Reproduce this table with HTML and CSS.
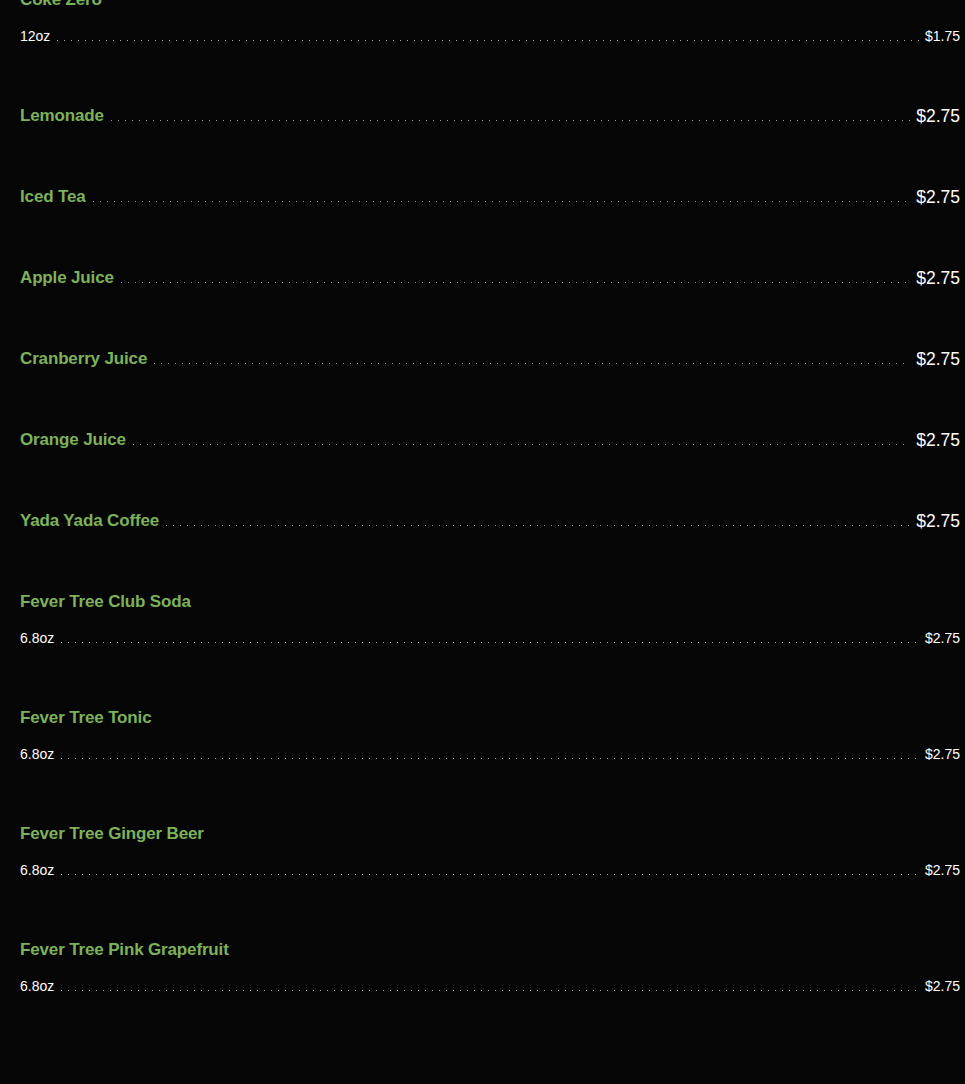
FILE: index.html
```html
<!DOCTYPE html>
<html lang="en">
<head>
    <meta charset="UTF-8">
    <title>Drinks</title>
    <link rel="stylesheet" href="styles.css">
</head>
<body>
    <div class="menu">
        <div class="item">
            <h3 class="item-name">Coke Zero</h3>
            <div class="item-row size-row">
                <span class="size">12oz</span>
                <span class="dots"></span>
                <span class="price">$1.75</span>
            </div>
        </div>

        <div class="item">
            <div class="item-row">
                <h3 class="item-name">Lemonade</h3>
                <span class="dots"></span>
                <span class="price">$2.75</span>
            </div>
        </div>

        <div class="item">
            <div class="item-row">
                <h3 class="item-name">Iced Tea</h3>
                <span class="dots"></span>
                <span class="price">$2.75</span>
            </div>
        </div>

        <div class="item">
            <div class="item-row">
                <h3 class="item-name">Apple Juice</h3>
                <span class="dots"></span>
                <span class="price">$2.75</span>
            </div>
        </div>

        <div class="item">
            <div class="item-row">
                <h3 class="item-name">Cranberry Juice</h3>
                <span class="dots"></span>
                <span class="price">$2.75</span>
            </div>
        </div>

        <div class="item">
            <div class="item-row">
                <h3 class="item-name">Orange Juice</h3>
                <span class="dots"></span>
                <span class="price">$2.75</span>
            </div>
        </div>

        <div class="item">
            <div class="item-row">
                <h3 class="item-name">Yada Yada Coffee</h3>
                <span class="dots"></span>
                <span class="price">$2.75</span>
            </div>
        </div>

        <div class="item">
            <h3 class="item-name">Fever Tree Club Soda</h3>
            <div class="item-row size-row">
                <span class="size">6.8oz</span>
                <span class="dots"></span>
                <span class="price">$2.75</span>
            </div>
        </div>

        <div class="item">
            <h3 class="item-name">Fever Tree Tonic</h3>
            <div class="item-row size-row">
                <span class="size">6.8oz</span>
                <span class="dots"></span>
                <span class="price">$2.75</span>
            </div>
        </div>

        <div class="item">
            <h3 class="item-name">Fever Tree Ginger Beer</h3>
            <div class="item-row size-row">
                <span class="size">6.8oz</span>
                <span class="dots"></span>
                <span class="price">$2.75</span>
            </div>
        </div>

        <div class="item">
            <h3 class="item-name">Fever Tree Pink Grapefruit</h3>
            <div class="item-row size-row">
                <span class="size">6.8oz</span>
                <span class="dots"></span>
                <span class="price">$2.75</span>
            </div>
        </div>
    </div>
</body>
</html>
```

FILE: styles.css
```css
body {
    font-family: 'Liberation Sans', Arial, sans-serif;
    background-color: #050505;
    color: #fff;
    margin: 0;
    padding: 0;
}

/* page is shown scrolled a little, so the first title is cut */
.menu {
    display: flex;
    flex-direction: column;
    gap: 57px;
    padding: 0 5px 80px 20px;
    margin-top: -12px;
}

.item {
    display: flex;
    flex-direction: column;
    gap: 15px;
}

.item-name {
    margin: 0;
    font-size: 17px;
    line-height: 24px;
    font-weight: bold;
    letter-spacing: -0.15px;
    color: #7cb25a;
    white-space: nowrap;
}

.item-row {
    display: flex;
    align-items: flex-end;
    font-size: 17.5px;
    line-height: 24px;
}

.price {
    white-space: nowrap;
}

/* dotted leader between name and price */
.dots {
    flex: 1;
    height: 1px;
    margin: 0 6px 7px 7px;
    background-image: linear-gradient(to right, #9a9a9a 1px, transparent 1px);
    background-size: 7px 1px;
    background-repeat: repeat-x;
}

.size-row {
    font-size: 14px;
    line-height: 18px;
    margin-bottom: 2px;
}

.size-row .dots {
    margin-bottom: 4px;
    background-image: linear-gradient(to right, #a8a8a8 1px, transparent 1px);
}
```
